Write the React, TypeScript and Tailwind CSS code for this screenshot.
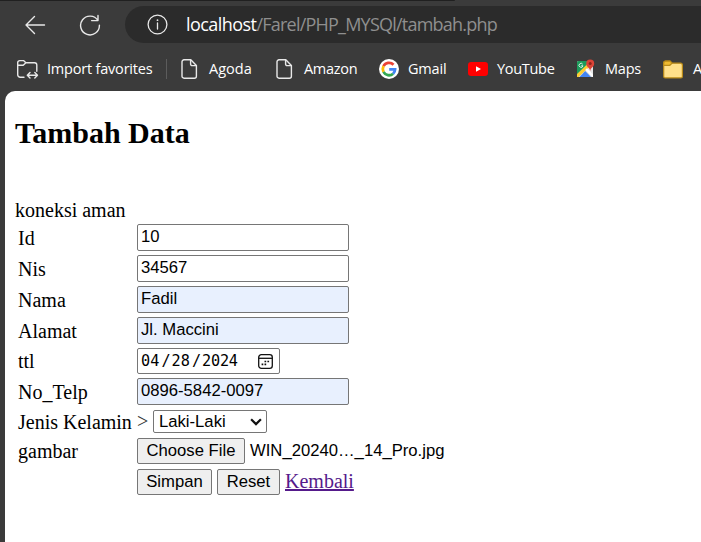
import React from "react";

const control = "shrink-0 border border-[#767676] rounded-[2px] font-['Liberation_Sans',Arial,sans-serif] text-[16.67px] leading-[20px] whitespace-nowrap";

function Row({ label, height, children }: { label: string; height: string; children: React.ReactNode }) {
  return (
    <div className={`flex items-center ${height}`}>
      <div className="w-[119px] shrink-0 whitespace-nowrap">{label}</div>
      {children}
    </div>
  );
}

function Field({ value, filled }: { value: string; filled?: boolean }) {
  return (
    <input
      type="text"
      defaultValue={value}
      className={`${control} h-[27px] w-[212px] pl-[3px] pb-px outline-none ${filled ? "bg-[#e8f0fe]" : "bg-white"}`}
    />
  );
}

function PageIcon() {
  return (
    <svg className="shrink-0" width="17" height="20" viewBox="0 0 17 20" fill="none" stroke="#e8e8e8" strokeWidth="1.4" strokeLinejoin="round">
      <path d="M3 .8h6.8l5.6 5.7v10.7a2 2 0 0 1-2 2H3a2 2 0 0 1-2-2V2.8a2 2 0 0 1 2-2Z" />
      <path d="M9.6 1v4a1.6 1.6 0 0 0 1.6 1.6h4" />
    </svg>
  );
}

function Bookmark({ label, width, className, children }: { label: string; width: string; className: string; children: React.ReactNode }) {
  return (
    <div className={`flex shrink-0 items-center ${width}`}>
      {children}
      <span className={`whitespace-nowrap ${className}`}>{label}</span>
    </div>
  );
}

function BrowserBar() {
  return (
    <header className="h-[91px] shrink-0 overflow-hidden bg-[#3b3b3b] font-['Open_Sans','Noto_Sans',sans-serif] text-white">
      <div className="h-px w-[455px] rounded-br bg-[#202020]" />
      <div className="mt-[5px] flex h-[37px] items-center">
        <svg className="ml-[24px] shrink-0" width="22" height="20" viewBox="0 0 22 20" fill="none" stroke="#e8e8e8" strokeWidth="1.4" strokeLinecap="round" strokeLinejoin="round">
          <path d="M10.5 1.5 2 10l8.5 8.5M2 10h18.5" />
        </svg>
        <svg className="ml-[33px] shrink-0" width="22" height="22" viewBox="0 0 22 22" fill="none" stroke="#e8e8e8" strokeWidth="1.4" strokeLinecap="round" strokeLinejoin="round">
          <path d="M18.9 6.4A9.4 9.4 0 1 0 20.4 11.3M19 1.5v5.1h-6.4" />
        </svg>
        <div className="ml-[24px] flex h-[37px] flex-1 items-center overflow-hidden rounded-l-full bg-[#2b2b2b]">
          <svg className="ml-[22px] shrink-0" width="21" height="21" viewBox="0 0 21 21" fill="none" stroke="#e8e8e8" strokeWidth="1.3">
            <circle cx="10.5" cy="10.5" r="9.4" />
            <path d="M10.5 9v6" strokeLinecap="round" />
            <circle cx="10.5" cy="6.2" r=".9" fill="#e8e8e8" stroke="none" />
          </svg>
          <span className="ml-[18px] whitespace-nowrap text-[18px] tracking-[-0.78px] text-[#8f8f8f]">
            <span className="tracking-[-0.55px] text-white">localhost</span>/Farel/PHP_MYSQl/tambah.php
          </span>
        </div>
      </div>
      <div className="mt-[10px] flex h-[32px] items-center pl-[16px] text-[14.5px]">
        <Bookmark label="Import favorites" width="w-[149px]" className="ml-[8px] tracking-[-0.2px]">
          <svg className="shrink-0" width="23" height="21" viewBox="0 0 23 21" fill="none" stroke="#e8e8e8" strokeWidth="1.4" strokeLinecap="round" strokeLinejoin="round">
            <path d="M8 18.3H4.2a2.5 2.5 0 0 1-2.5-2.5V3.6a2 2 0 0 1 2-2h3.8l2.4 2.2h8.7a2.2 2.2 0 0 1 2.2 2.2v6.3M1.7 6.3h5.5l2.7-2.5M11.5 16.2h9.8m-7.3-2.7-2.7 2.7 2.7 2.7m4.8-5.4 2.7 2.7-2.7 2.7" />
          </svg>
        </Bookmark>
        <div className="mr-[14px] ml-px h-[20px] w-px shrink-0 bg-[#5c5c5c]" />
        <Bookmark label="Agoda" width="w-[95px]" className="ml-[11px]"><PageIcon /></Bookmark>
        <Bookmark label="Amazon" width="w-[103px]" className="ml-[11px] tracking-[-0.3px]"><PageIcon /></Bookmark>
        <Bookmark label="Gmail" width="w-[89px]" className="ml-[9px] tracking-[-0.2px]">
          <svg className="shrink-0" width="20" height="20" viewBox="0 0 20 20" fill="none">
            <circle cx="10" cy="10" r="10" fill="#fff" />
            <g strokeWidth="2.8">
              <path d="M14.5 5.7A6.2 6.2 0 0 0 4.5 7.2" stroke="#ea4335" />
              <path d="M4.5 7.2a6.2 6.2 0 0 0 0 5.7" stroke="#fbbc05" />
              <path d="M4.5 12.9a6.2 6.2 0 0 0 9.6 1.8" stroke="#34a853" />
              <path d="M14.1 14.7a6 6 0 0 0 2-4.4H10.2" stroke="#4285f4" />
            </g>
          </svg>
        </Bookmark>
        <Bookmark label="YouTube" width="w-[108px]" className="ml-[9px] tracking-[-0.3px]">
          <svg className="shrink-0" width="20" height="14" viewBox="0 0 20 14">
            <rect width="20" height="14" rx="3.2" fill="#f00" />
            <path d="m8 4.2 5 2.8-5 2.8Z" fill="#fff" />
          </svg>
        </Bookmark>
        <Bookmark label="Maps" width="w-[87px]" className="ml-[9px] tracking-[-0.2px]">
          <svg className="shrink-0" width="20" height="20" viewBox="0 0 20 20">
            <rect x="1" y="2" width="16" height="16" rx="1.5" fill="#e6e6e6" />
            <path d="M1 14.5 12.4 3.7 15 6.3 2.7 18H1Z" fill="#fbcd33" />
            <path d="m9.3 10.8 1.6-1.6 6.1 6.2V18h-.7Z" fill="#fff" />
            <path d="M3.5 18 9.2 12l5.8 6Z" fill="#4285f4" />
            <path d="M1 3.5A1.5 1.5 0 0 1 2.5 2H12v2.5L1 15Z" fill="#1c9b5b" />
            <path d="M6.7 5.2a2 2 0 1 0 .3 1.6H5.2" stroke="#e9f6ef" strokeWidth=".9" fill="none" />
            <path d="M14.2 12c-.4-3.4-4-4.1-4-7.5a4 4 0 0 1 8 0c0 3.4-3.6 4.1-4 7.5Z" fill="#db4437" />
            <circle cx="14.2" cy="4.5" r="1.5" fill="#8c241b" />
          </svg>
        </Bookmark>
        <Bookmark label="A" width="w-[60px]" className="ml-[10px]">
          <svg className="shrink-0" width="20" height="19" viewBox="0 0 20 19" strokeWidth="1.2" stroke="#b98a18">
            <path d="M.7 3A1.8 1.8 0 0 1 2.5 1.2H7l2 2h8.6a1.8 1.8 0 0 1 1.8 1.8v11.4a1.5 1.5 0 0 1-1.5 1.5H2.2a1.5 1.5 0 0 1-1.5-1.5Z" fill="#ffe08a" />
            <path d="M.7 5.3V3a1.8 1.8 0 0 1 1.8-1.8H7l2 2-2.2 2.1Z" fill="#eeba30" />
          </svg>
        </Bookmark>
      </div>
    </header>
  );
}

export default function App() {
  return (
    <div className="flex h-[542px] w-[701px] flex-col overflow-hidden bg-[#3b3b3b]">
      <BrowserBar />
      <main className="ml-[5px] flex-1 rounded-tl-[10px] bg-white pl-[10px] font-['Liberation_Serif','Times_New_Roman',serif] text-[20px] leading-[24px] text-black">
        <h2 className="pt-[25px] text-[30px] leading-[34px] font-bold">Tambah Data</h2>
        <p className="mt-[48px] h-[24px] whitespace-nowrap">koneksi aman</p>
        <form className="pl-[3px]" onSubmit={(e) => e.preventDefault()}>
          <Row label="Id" height="h-[31px]"><Field value="10" /></Row>
          <Row label="Nis" height="h-[31px]"><Field value="34567" /></Row>
          <Row label="Nama" height="h-[31px]"><Field value="Fadil" filled /></Row>
          <Row label="Alamat" height="h-[31px]"><Field value="Jl. Maccini" filled /></Row>
          <Row label="ttl" height="h-[30px]">
            <div className={`${control} flex h-[26px] w-[143px] items-center bg-white pr-[6px] pl-[3px]`}>
              <span className="flex flex-1 items-center font-['DejaVu_Sans_Mono',monospace] text-[15.2px]">
                <span className="w-[20.5px]">04</span><span className="w-[10px]">/</span>
                <span className="w-[20.5px]">28</span><span className="w-[10px]">/</span>
                <span className="tracking-[-0.2px]">2024</span>
              </span>
              <svg className="shrink-0" width="15" height="15" viewBox="0 0 15 15" fill="none" stroke="#111" strokeWidth="1.3">
                <rect x=".7" y=".7" width="13.6" height="13.6" rx="2.6" />
                <path d="M.7 4.3h13.6" />
                <path d="M6.5 7.5h1.7m1.2 0h1.7M3.6 10.4h1.7m1.2 0h1.7" strokeWidth="1.7" />
              </svg>
            </div>
          </Row>
          <Row label="No_Telp" height="h-[31px]"><Field value="0896-5842-0097" filled /></Row>
          <Row label="Jenis Kelamin" height="h-[29px]">
            <span className="w-[16px] shrink-0 pb-px text-[#333]">&gt;</span>
            <div className={`${control} flex h-[23px] w-[114px] items-center justify-between bg-white pr-[4px] pl-[5px]`}>
              Laki-Laki
              <svg width="12" height="8" viewBox="0 0 12 8" fill="none" stroke="#111" strokeWidth="2.2">
                <path d="m1.1 1.2 4.9 4.9 4.9-4.9" />
              </svg>
            </div>
          </Row>
          <Row label="gambar" height="h-[30px]">
            <button type="button" className={`${control} h-[26px] w-[108px] bg-[#efefef]`}>Choose File</button>
            <span className="ml-[5px] whitespace-nowrap font-['Liberation_Sans',Arial,sans-serif] text-[16.67px]">WIN_20240…_14_Pro.jpg</span>
          </Row>
          <Row label="" height="h-[32px]">
            <button type="submit" className={`${control} h-[26px] w-[75px] bg-[#efefef]`}>Simpan</button>
            <button type="reset" className={`${control} ml-[5px] h-[26px] w-[63px] bg-[#efefef]`}>Reset</button>
            <a href="#" className="ml-[5px] pb-[2px] text-[#551a8b] underline">Kembali</a>
          </Row>
        </form>
      </main>
    </div>
  );
}
